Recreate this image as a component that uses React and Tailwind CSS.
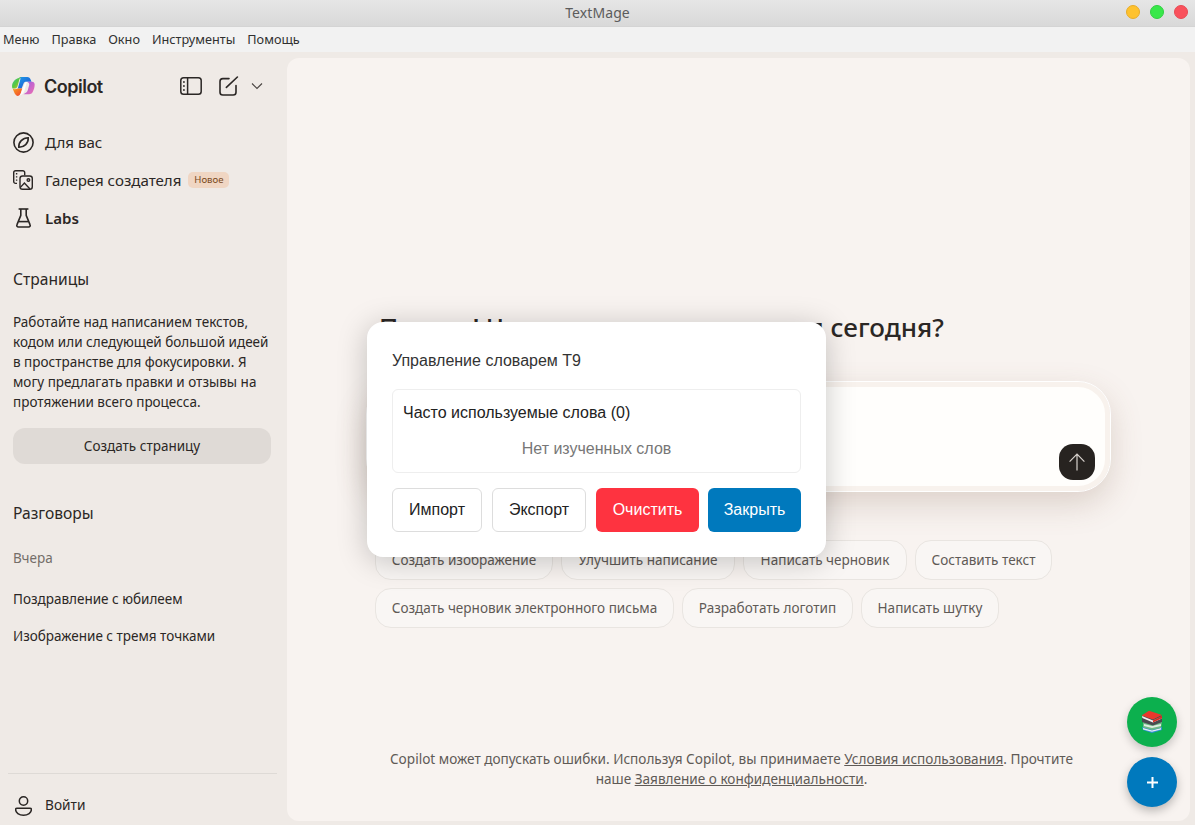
import React from "react";

function Logo() {
  return (
    <svg width="23" height="21" viewBox="0 0 24 22" fill="none">
      <defs>
        <linearGradient id="a" x1="0" y1="0" x2="1" y2="1"><stop offset="0" stopColor="#1f9ce8" /><stop offset="1" stopColor="#1c4fd0" /></linearGradient>
        <linearGradient id="b" x1="0" y1="0" x2="1" y2="1"><stop offset="0" stopColor="#9a5ae8" /><stop offset="1" stopColor="#f070b0" /></linearGradient>
        <linearGradient id="c" x1="0" y1="0" x2="1" y2="1"><stop offset="0" stopColor="#38c0a0" /><stop offset="0.5" stopColor="#58c840" /><stop offset="1" stopColor="#f0c020" /></linearGradient>
        <linearGradient id="d" x1="0" y1="0" x2="1" y2="1"><stop offset="0" stopColor="#f8a020" /><stop offset="1" stopColor="#f04030" /></linearGradient>
      </defs>
      <path d="M8 1h8c2 0 2.8 1 3.4 2.6l1 2.4H15c-1.6 0-2.6.6-3 2L10 13H6l2.6-9C8.9 2.8 8.8 1.6 8 1z" fill="url(#a)" />
      <path d="M16 6h5c1.6 0 2.7 1.2 2.7 3 0 3-1 6-2.2 8-.9 1.5-2.2 2-3.6 2H12l2-1.2c1.5-.6 2-1.6 2.6-3.4l1.4-5c.3-1.3-.4-2.4-2-3.4z" fill="url(#b)" />
      <path d="M7 2c1-.8 2-1 2.6-1C8.4 1.6 8 2.6 7.6 4L6 10c-.4 1.6-1 3-3 3H.6C.2 12.6 0 11.5 0 10.4 0 7 2.8 3 7 2z" fill="url(#c)" />
      <path d="M6 13h4.6l-1 3.6C9.1 18.6 8 21 6 21 3.6 21 2 17 .8 13.4 2 14 4.4 14 6 13z" fill="url(#d)" />
      <path d="M13 8.5c.5-1.4 1.2-2.2 3-2.5-.5.4-.9 1.6-1.2 3l-1.3 4.5c-.5 1.9-1.2 4.5-3.4 6-1 .7-1.6.9-3.1 1.4 1.4-.4 2.2-2 2.8-4.4z" fill="#fff" opacity=".85" />
    </svg>
  );
}

function PanelIcon() {
  return (
    <svg width="22" height="18" viewBox="0 0 22 18" fill="none" stroke="#2b2725" strokeWidth="1.5">
      <rect x="0.8" y="0.8" width="20.4" height="16.4" rx="2.8" />
      <path d="M7.6 0.8v16.4" />
      <path d="M3 5h1.8M3 9h1.8M3 13h1.8" strokeWidth="1.7" />
    </svg>
  );
}

function EditIcon() {
  return (
    <svg width="20" height="20" viewBox="0 0 20 20" fill="none" stroke="#2b2725" strokeWidth="1.6" strokeLinecap="round">
      <path d="M10 2.6H3.8A2.8 2.8 0 0 0 1 5.4v10.8A2.8 2.8 0 0 0 3.8 19h10.4a2.8 2.8 0 0 0 2.8-2.8V9.6" />
      <path d="M7.4 11.4L18.4 1" />
    </svg>
  );
}

function Chevron() {
  return (
    <svg width="12" height="8" viewBox="0 0 12 8" fill="none" stroke="#4a4542" strokeWidth="1.1">
      <path d="M1 1.5l5 5 5-5" />
    </svg>
  );
}

function CompassIcon() {
  return (
    <svg width="21" height="21" viewBox="0 0 21 21" fill="none" stroke="#2b2725" strokeWidth="1.6">
      <circle cx="10.5" cy="10.5" r="9.6" />
      <path d="M5.8 15.2c-.4-5 3.8-9.4 9.4-9.4.5 5.4-4 9.6-9.4 9.4z" />
    </svg>
  );
}

function GalleryIcon() {
  return (
    <svg width="20" height="20" viewBox="0 0 20 20" fill="none" stroke="#2b2725" strokeWidth="1.4">
      <path d="M4 13.4H2.6A1.9 1.9 0 0 1 .7 11.5V2.6A1.9 1.9 0 0 1 2.6.7h7.2a1.9 1.9 0 0 1 1.9 1.9v2.6" />
      <path d="M3.6 3v1.4M3.6 6.2v1.4M3.6 9.4v1.4" strokeWidth="1.4" />
      <rect x="7" y="6" width="12.3" height="13.3" rx="2.6" />
      <circle cx="15.4" cy="10" r="1.3" />
      <path d="M7.4 17.4l4-4.4 5.6 6" />
    </svg>
  );
}

function FlaskIcon() {
  return (
    <svg width="15" height="20" viewBox="0 0 15 20" fill="none" stroke="#2b2725" strokeWidth="1.6" strokeLinejoin="round">
      <path d="M2.6 1h9.8" />
      <path d="M4.8 1v6.4L1 16.6a1.6 1.6 0 0 0 1.5 2.4h10a1.6 1.6 0 0 0 1.5-2.4l-3.8-9.2V1" />
      <path d="M2.6 13.6h9.8" />
    </svg>
  );
}

function UserIcon() {
  return (
    <svg width="17" height="20" viewBox="0 0 17 20" fill="none" stroke="#2b2725" strokeWidth="1.5">
      <circle cx="8.5" cy="5" r="4.2" />
      <path d="M2 12.2h13c.9 0 1.4.6 1.4 1.4 0 3-3.4 5.6-7.9 5.6S.6 16.6.6 13.6c0-.8.6-1.4 1.4-1.4z" />
    </svg>
  );
}

function Books() {
  return (
    <svg width="24" height="24" viewBox="0 0 24 24">
      <path d="M2 17l9-2 11 2v3l-10 3-9-3z" fill="#2f8fd8" />
      <path d="M3 18l9 2.6 9-2.6v1.4l-9 2.4-9-2.4z" fill="#e8eef2" />
      <path d="M3 12l9-2.4 10 2.4-1 6-9 2-9-2.4z" fill="#6fb886" />
      <path d="M4 14l8 2 9-2v2l-9 2-8-2z" fill="#dfeee0" />
      <path d="M2 7l10-5 10 4v6l-9 3.4L2 12z" fill="#4a4a4f" />
      <path d="M1.6 5.6L9 .8l13 4.2-9 4.4z" fill="#e8382c" />
      <path d="M2 6l11 4.4 8.6-4-.2 2.4-8.4 3.6L2.4 8z" fill="#f2f2f2" />
      <path d="M13 10.4l9-4.6v2.4l-9 4.4z" fill="#d82c24" />
    </svg>
  );
}

const chips1 = [
  ["Создать изображение", "w-[178px]"],
  ["Улучшить написание", "w-[174px]"],
  ["Написать черновик", "w-[164px]"],
  ["Составить текст", "w-[137px]"],
];
const chips2 = [
  ["Создать черновик электронного письма", "w-[299px]"],
  ["Разработать логотип", "w-[171px]"],
  ["Написать шутку", "w-[138px]"],
];

function Chip({ children, width }) {
  return (
    <div className={`${width} h-10 flex items-center justify-center rounded-2xl border border-[#e9e5e1] bg-[#f9f6f4] text-[13.55px] text-[#5f5a56] whitespace-nowrap`}>
      {children}
    </div>
  );
}

function NavItem({ icon, children, bold, extra }) {
  return (
    <div className="h-[38px] flex items-center">
      <div className="w-[32px] flex">{icon}</div>
      <span className={`text-[15.1px] ${bold ? "font-semibold" : ""} text-[#2b2725]`}>{children}</span>
      {extra}
    </div>
  );
}

export default function App() {
  return (
    <div className="relative w-full h-screen overflow-hidden flex flex-col bg-[#efeae6] font-['Noto_Sans',sans-serif] text-[#2b2725]">
      <div className="h-[27px] shrink-0 flex items-center justify-between bg-gradient-to-b from-[#e6e6e6] to-[#d9d9d9] border-b border-[#d4d4d4]">
        <div className="w-[69px]" />
        <div className="text-sm text-[#5c5c5c] tracking-[0.1px]">TextMage</div>
        <div className="flex items-center gap-[10px] pr-[7px] pb-[2px]">
          <div className="w-[14px] h-[14px] rounded-full bg-[#fec22e] border border-[#e8ac28]" />
          <div className="w-[14px] h-[14px] rounded-full bg-[#38e84a] border border-[#30d040]" />
          <div className="w-[14px] h-[14px] rounded-full bg-[#f9515c] border border-[#e84a54]" />
        </div>
      </div>
      <div className="h-[25px] shrink-0 flex items-center gap-[12px] pl-[3px] bg-[#f2f2f2] text-[12.7px] text-[#303030]">
        <span>Меню</span>
        <span>Правка</span>
        <span>Окно</span>
        <span>Инструменты</span>
        <span>Помощь</span>
      </div>

      <div className="flex-1 flex min-h-0">
        <aside className="w-[287px] shrink-0 flex flex-col">
          <div className="h-[68px] flex items-center pl-[12px] pr-[24px]">
            <Logo />
            <span className="ml-[9px] text-[18px] font-semibold font-['Inter',sans-serif] tracking-[-0.5px] text-[#2b2725]">Copilot</span>
            <div className="ml-auto flex items-center">
              <PanelIcon />
              <div className="ml-[17px]"><EditIcon /></div>
              <div className="ml-[12px]"><Chevron /></div>
            </div>
          </div>
          <div className="pl-[13px] flex flex-col mt-[3px]">
            <NavItem icon={<CompassIcon />}>Для вас</NavItem>
            <NavItem
              icon={<GalleryIcon />}
              extra={
                <span className="ml-[7px] h-4 w-[41px] text-center rounded-[5px] bg-[#f0d6c3] text-[9.6px] leading-4 text-[#7b4a22]">Новое</span>
              }
            >
              Галерея создателя
            </NavItem>
            <NavItem icon={<div className="ml-[3px]"><FlaskIcon /></div>} bold>Labs</NavItem>
          </div>
          <div className="pl-[13px] pr-[16px] mt-[31px]">
            <div className="text-[15.6px] leading-[22px] text-[#2b2725]">Страницы</div>
            <p className="mt-[22px] text-[13.5px] leading-5 text-[#2b2725]">
              Работайте над написанием текстов, кодом или следующей большой идеей в пространстве для фокусировки. Я могу предлагать правки и отзывы на протяжении всего процесса.
            </p>
            <div className="mt-4 h-9 rounded-xl bg-[#dfdad6] flex items-center justify-center text-[13.5px] text-[#2b2725]">Создать страницу</div>
            <div className="mt-[38px] text-[15.6px] leading-[22px]">Разговоры</div>
            <div className="mt-[24px] text-[13.5px] leading-5 text-[#746e69]">Вчера</div>
            <div className="mt-[21px] text-[13.5px] leading-5">Поздравление с юбилеем</div>
            <div className="mt-[17px] text-[13.5px] leading-5">Изображение с тремя точками</div>
          </div>
          <div className="mt-auto ml-[8px] mr-[10px] border-t border-[#dedad6] h-[52px] flex items-center pl-[7px] pt-[12px]">
            <UserIcon />
            <span className="ml-[13px] text-[13.7px]">Войти</span>
          </div>
        </aside>

        <main className="flex-1 mt-[6px] mb-[4px] mr-[5px] rounded-xl bg-[#f8f3f0] flex flex-col items-center min-w-0">
          <div className="mt-[251px] w-[731px] pl-[6px] text-[26px] leading-9 font-medium text-[#2b2725] whitespace-nowrap">
            Привет! Чем нам следует заняться сегодня?
          </div>
          <div className="mt-[37px] w-[743px] h-[109px] rounded-[32px] border-[5px] border-[#f8f2ed] outline outline-1 outline-white bg-[#fffefc] shadow-[0_12px_32px_rgba(120,80,60,0.22)] flex items-end justify-end pr-[10px] pb-[6px]">
            <div className="w-9 h-9 rounded-[14px] bg-[#272320] flex items-center justify-center">
              <svg width="20" height="20" viewBox="0 0 20 20" fill="none" stroke="#d8d2cd" strokeWidth="1.2">
                <path d="M10 18.4V2.4M2.6 9.6L10 2.2l7.4 7.4" />
              </svg>
            </div>
          </div>
          <div className="mt-[49px] w-[727px] flex flex-col gap-2">
            <div className="flex gap-2">{chips1.map(([c, w]) => <Chip key={c} width={w}>{c}</Chip>)}</div>
            <div className="flex gap-2">{chips2.map(([c, w]) => <Chip key={c} width={w}>{c}</Chip>)}</div>
          </div>
          <div className="mt-auto mb-[32px] w-[731px] pr-[14px] text-center text-[13.58px] leading-5 text-[#5f5a56]">
            Copilot может допускать ошибки. Используя Copilot, вы принимаете <span className="underline">Условия использования</span>. Прочтите
            <br />
            наше <span className="underline">Заявление о конфиденциальности</span>.
          </div>
        </main>
      </div>

      <div className="absolute left-[1127px] top-[697px] w-[50px] h-[50px] rounded-full bg-[#0cb04e] shadow-[0_4px_10px_rgba(0,0,0,0.2)] flex items-center justify-center">
        <Books />
      </div>
      <div className="absolute left-[1127px] top-[757px] w-[50px] h-[50px] rounded-full bg-[#0079bd] shadow-[0_4px_10px_rgba(0,0,0,0.25)] flex items-center justify-center">
        <svg width="11" height="11" viewBox="0 0 11 11" stroke="#fff" strokeWidth="2"><path d="M5.5 0v11M0 5.5h11" /></svg>
      </div>

      <div className="absolute left-[367px] top-[322px] w-[459px] h-[235px] rounded-2xl bg-white shadow-[0_4px_30px_rgba(0,0,0,0.22)] px-[25px] pt-[26px] font-['Liberation_Sans',sans-serif]">
        <div className="text-base leading-[26px] text-[#333333]">Управление словарем T9</div>
        <div className="mt-[15px] h-[84px] w-[409px] rounded-md border border-[#eeeeee] px-[10px] pt-[12px]">
          <div className="text-base leading-[22px] text-[#222222]">Часто используемые слова (0)</div>
          <div className="mt-[14px] text-center text-base leading-[22px] text-[#777777]">Нет изученных слов</div>
        </div>
        <div className="mt-[15px] flex gap-[10px] h-[44px] text-base">
          <div className="w-[90px] rounded-md border border-[#dddddd] flex items-center justify-center text-[#222222]">Импорт</div>
          <div className="w-[94px] rounded-md border border-[#dddddd] flex items-center justify-center text-[#222222]">Экспорт</div>
          <div className="w-[103px] rounded-md bg-[#fe3340] flex items-center justify-center text-white">Очистить</div>
          <div className="w-[93px] ml-[-1px] rounded-md bg-[#0079bd] flex items-center justify-center text-white">Закрыть</div>
        </div>
      </div>
    </div>
  );
}
